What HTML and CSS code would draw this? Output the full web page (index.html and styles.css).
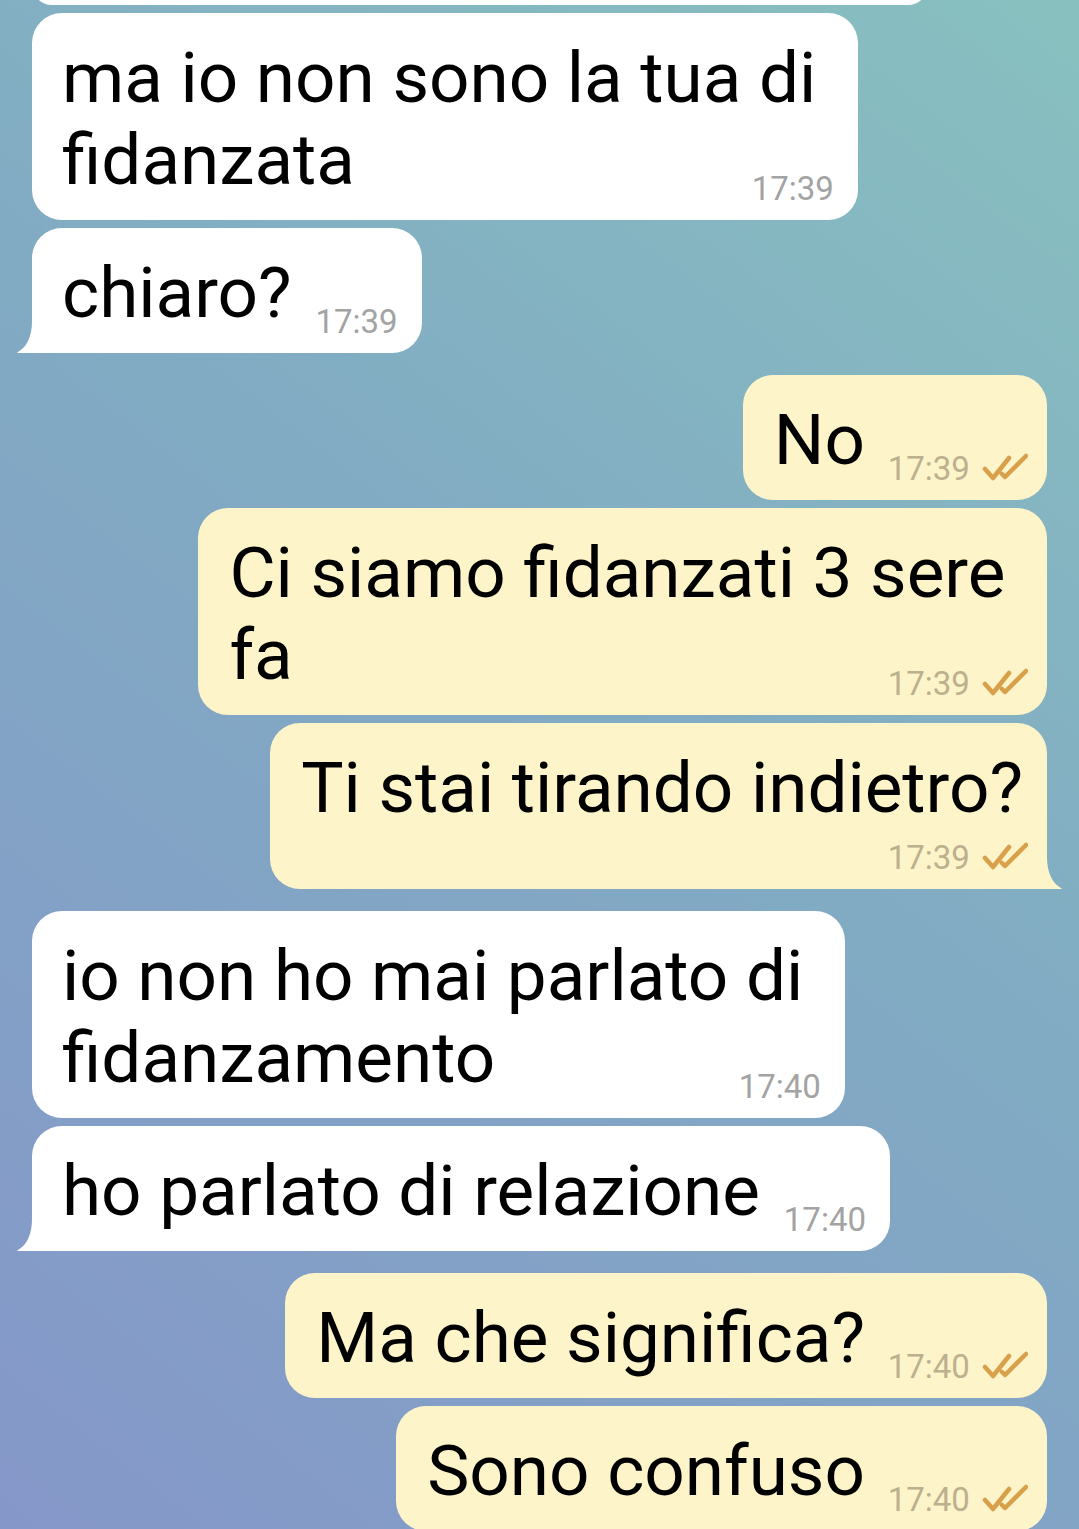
FILE: index.html
```html
<!DOCTYPE html>
<html lang="it">
  <head>
    <meta charset="UTF-8" />
    <meta name="viewport" content="width=device-width, initial-scale=1.0" />
    <title>Chat</title>
    <link rel="stylesheet" href="styles.css">
  </head>
  <body>
    <div class="chat">
      <!-- previous message, cut off at the top -->
      <div class="msg in partial"></div>

      <div class="msg in">
        <span class="text">ma io non sono la tua di&nbsp;<br>fidanzata</span><span class="spacer"></span>
        <span class="meta">17:39</span>
      </div>
      <div class="msg in tail">
        <span class="text">chiaro?</span><span class="spacer"></span>
        <span class="meta">17:39</span>
        <svg class="tail-in" width="16" height="32" viewBox="0 0 16 32"><path d="M16 0 C16 15 11 26 2 31 Q0 32 3 32 L16 32 Z" /></svg>
      </div>

      <div class="msg out group">
        <span class="text">No</span><span class="spacer"></span>
        <span class="meta">17:39 <svg class="checks" width="46" height="28" viewBox="0 0 46 28"><path d="M3 16 L11 25 L27 5 M20 21 L23 24 L44 3" /></svg></span>
      </div>
      <div class="msg out">
        <span class="text">Ci siamo fidanzati 3 sere&nbsp;<br>fa</span><span class="spacer"></span>
        <span class="meta">17:39 <svg class="checks" width="46" height="28" viewBox="0 0 46 28"><path d="M3 16 L11 25 L27 5 M20 21 L23 24 L44 3" /></svg></span>
      </div>
      <div class="msg out tail">
        <span class="text">Ti stai tirando indietro?</span><br><span class="spacer"></span>
        <span class="meta">17:39 <svg class="checks" width="46" height="28" viewBox="0 0 46 28"><path d="M3 16 L11 25 L27 5 M20 21 L23 24 L44 3" /></svg></span>
        <svg class="tail-out" width="16" height="32" viewBox="0 0 16 32"><path d="M0 0 C0 15 5 26 14 31 Q16 32 13 32 L0 32 Z" /></svg>
      </div>

      <div class="msg in group">
        <span class="text">io non ho mai parlato di&nbsp;<br>fidanzamento</span><span class="spacer"></span>
        <span class="meta">17:40</span>
      </div>
      <div class="msg in tail">
        <span class="text">ho parlato di relazione</span><span class="spacer"></span>
        <span class="meta">17:40</span>
        <svg class="tail-in" width="16" height="32" viewBox="0 0 16 32"><path d="M16 0 C16 15 11 26 2 31 Q0 32 3 32 L16 32 Z" /></svg>
      </div>

      <div class="msg out group">
        <span class="text">Ma che significa?</span><span class="spacer"></span>
        <span class="meta">17:40 <svg class="checks" width="46" height="28" viewBox="0 0 46 28"><path d="M3 16 L11 25 L27 5 M20 21 L23 24 L44 3" /></svg></span>
      </div>
      <div class="msg out">
        <span class="text">Sono confuso</span><span class="spacer"></span>
        <span class="meta">17:40 <svg class="checks" width="46" height="28" viewBox="0 0 46 28"><path d="M3 16 L11 25 L27 5 M20 21 L23 24 L44 3" /></svg></span>
      </div>
    </div>
  </body>
</html>
```

FILE: styles.css
```css
html,
body {
  height: 100%;
}
body {
  margin: 0;
  overflow: hidden;
  font-family: Roboto, "Noto Sans", Arial, sans-serif;
  background: linear-gradient(218deg, #88c0bf 0%, #81abc3 45%, #8597c9 100%);
}
.chat {
  display: flex;
  flex-direction: column;
  padding: 0 32px;
}
.msg {
  position: relative;
  box-sizing: border-box;
  max-width: 890px;
  margin-top: 8px;
  padding: 24px 24px 19px 30px;
  border-radius: 30px;
  font-size: 71px;
  line-height: 41px;
  color: #000;
}
.msg.group {
  margin-top: 22px;
}
.in {
  align-self: flex-start;
  background-color: #fff;
}
.out {
  align-self: flex-end;
  padding-left: 31px;
  background-color: #fdf4c9;
}
.partial {
  width: 896px;
  max-width: none;
  height: 40px;
  margin-top: -35px;
  padding: 0;
}
.text {
  line-height: 82px;
}
.spacer {
  display: inline-block;
  width: 106px;
  height: 1px;
  vertical-align: top;
}
.out .spacer {
  width: 158px;
}
.meta {
  position: absolute;
  right: 24px;
  bottom: 15px;
  font-size: 33px;
  line-height: 33px;
  color: #a3a3a3;
  white-space: nowrap;
}
.out .meta {
  right: 19px;
  color: #bcb08e;
}
.checks {
  margin-left: 4px;
  vertical-align: -1px;
  fill: none;
  stroke: #d9a04b;
  stroke-width: 4.5;
  stroke-linecap: round;
  stroke-linejoin: round;
}
.in.tail {
  border-bottom-left-radius: 0;
}
.out.tail {
  border-bottom-right-radius: 0;
}
.tail-in,
.tail-out {
  position: absolute;
  bottom: 0;
}
.tail-in {
  left: -16px;
  fill: #fff;
}
.tail-out {
  right: -16px;
  fill: #fdf4c9;
}
```
